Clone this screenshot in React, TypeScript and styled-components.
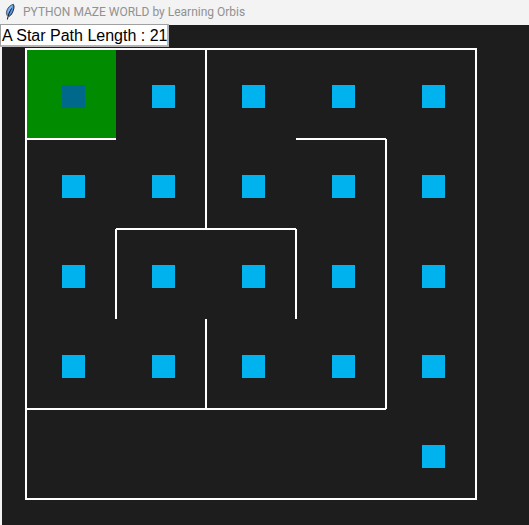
import React from "react";
import styled, { createGlobalStyle } from "styled-components";

const GlobalStyle = createGlobalStyle`
  * { box-sizing: border-box; }
  body { margin: 0; background: #f3f3f3; }
`;

const Window = styled.div`
  display: flex;
  flex-direction: column;
  min-height: 100vh;
  background: #f3f3f3;
`;

const TitleBar = styled.header`
  display: flex;
  align-items: center;
  gap: 6px;
  height: 25px;
  padding: 0 4px 2px;
`;

const Title = styled.h1`
  margin: 0;
  font: 400 12px/16px Roboto, "Open Sans", sans-serif;
  color: #919191;
  white-space: nowrap;
`;

const Canvas = styled.main`
  position: relative;
  flex: 1;
  margin-left: 2px;
  padding: 23px;
  background: #1d1d1d;
`;

const PathLabel = styled.div`
  position: absolute;
  top: -1px;
  left: -2px;
  height: 23px;
  padding: 1px 0 0 1px;
  border: 1px solid #a0a0a0;
  border-right: 2px solid #b4b4b4;
  border-bottom: 2px solid #b4b4b4;
  background: #fff;
  color: #000;
  font: 400 16px/20px "Liberation Sans", Arial, sans-serif;
  white-space: nowrap;
`;

const Maze = styled.div`
  display: grid;
  grid-template-columns: repeat(5, 90px);
  grid-auto-rows: 90px;
  width: max-content;
  border: 1px solid #fff;
`;

type Walls = { $top: boolean; $right: boolean; $bottom: boolean; $left: boolean };

const Cell = styled.div<Walls & { $goal: boolean }>`
  padding: 36px;
  background: ${(p) => (p.$goal ? "#008b00" : "transparent")};
  box-shadow: ${(p) =>
    [
      p.$top && "inset 0 1px #fff",
      p.$right && "inset -1px 0 #fff",
      p.$bottom && "inset 0 -1px #fff",
      p.$left && "inset 1px 0 #fff",
    ]
      .filter(Boolean)
      .join(", ") || "none"};
`;

const Step = styled.div<{ $goal: boolean }>`
  width: 23px;
  height: 23px;
  background: ${(p) => (p.$goal ? "#00688b" : "#00b2ee")};
`;

const SIZE = 5;

/* R: wall on the right of the cell, B: wall below it. */
const WALLS = [
  ["B", "R", "", "B", "R"],
  ["", "RB", "B", "R", "R"],
  ["R", "", "R", "R", "R"],
  ["B", "RB", "B", "RB", "R"],
  ["B", "B", "B", "B", "RB"],
];

const isOnPath = (row: number, col: number) => row < SIZE - 1 || col === SIZE - 1;

function FeatherIcon() {
  return (
    <svg width="13" height="18" viewBox="0 0 13 18" aria-hidden="true">
      <path
        d="M9.3 1.2 C10.3 2 10 5.5 9 8.2 C8.2 10.6 6.8 12.6 4.6 13.6 L3 12.6 C1.8 10.4 2.5 7 4.2 4.8 C5.6 3 7.6 1.4 9.3 1.2Z"
        fill="#5b98dc"
      />
      <path d="M8.6 2 C5.6 4.2 3.7 6.8 3.5 10.4 L6 7.4Z" fill="#8fc0f2" />
      <path d="M9.4 1.4 C10.6 3 9.8 7 8.4 9.6 C7.4 11.6 6.2 12.9 4.6 13.6" fill="none" stroke="#17202b" strokeWidth="1" />
      <path d="M9.3 1.2 C6.6 1.8 3.7 4.6 2.8 7.4 C2.2 9.4 2.2 11.3 3 12.6" fill="none" stroke="#3b4a5c" strokeWidth="0.8" />
      <path d="M7.6 5.4 C5.6 8.6 4.2 11.6 3.4 16.5" fill="none" stroke="#101820" strokeWidth="1" />
    </svg>
  );
}

export default function App() {
  return (
    <>
      <GlobalStyle />
      <Window>
        <TitleBar>
          <FeatherIcon />
          <Title>PYTHON MAZE WORLD by Learning Orbis</Title>
        </TitleBar>
        <Canvas>
          <Maze>
            {WALLS.flatMap((cells, row) =>
              cells.map((walls, col) => {
                const goal = row === 0 && col === 0;
                return (
                  <Cell
                    key={`${row}-${col}`}
                    $goal={goal}
                    $top={row === 0 || WALLS[row - 1][col].includes("B")}
                    $left={col === 0 || cells[col - 1].includes("R")}
                    $right={walls.includes("R")}
                    $bottom={walls.includes("B")}
                  >
                    {isOnPath(row, col) && <Step $goal={goal} />}
                  </Cell>
                );
              })
            )}
          </Maze>
          <PathLabel>A Star Path Length : 21</PathLabel>
        </Canvas>
      </Window>
    </>
  );
}
